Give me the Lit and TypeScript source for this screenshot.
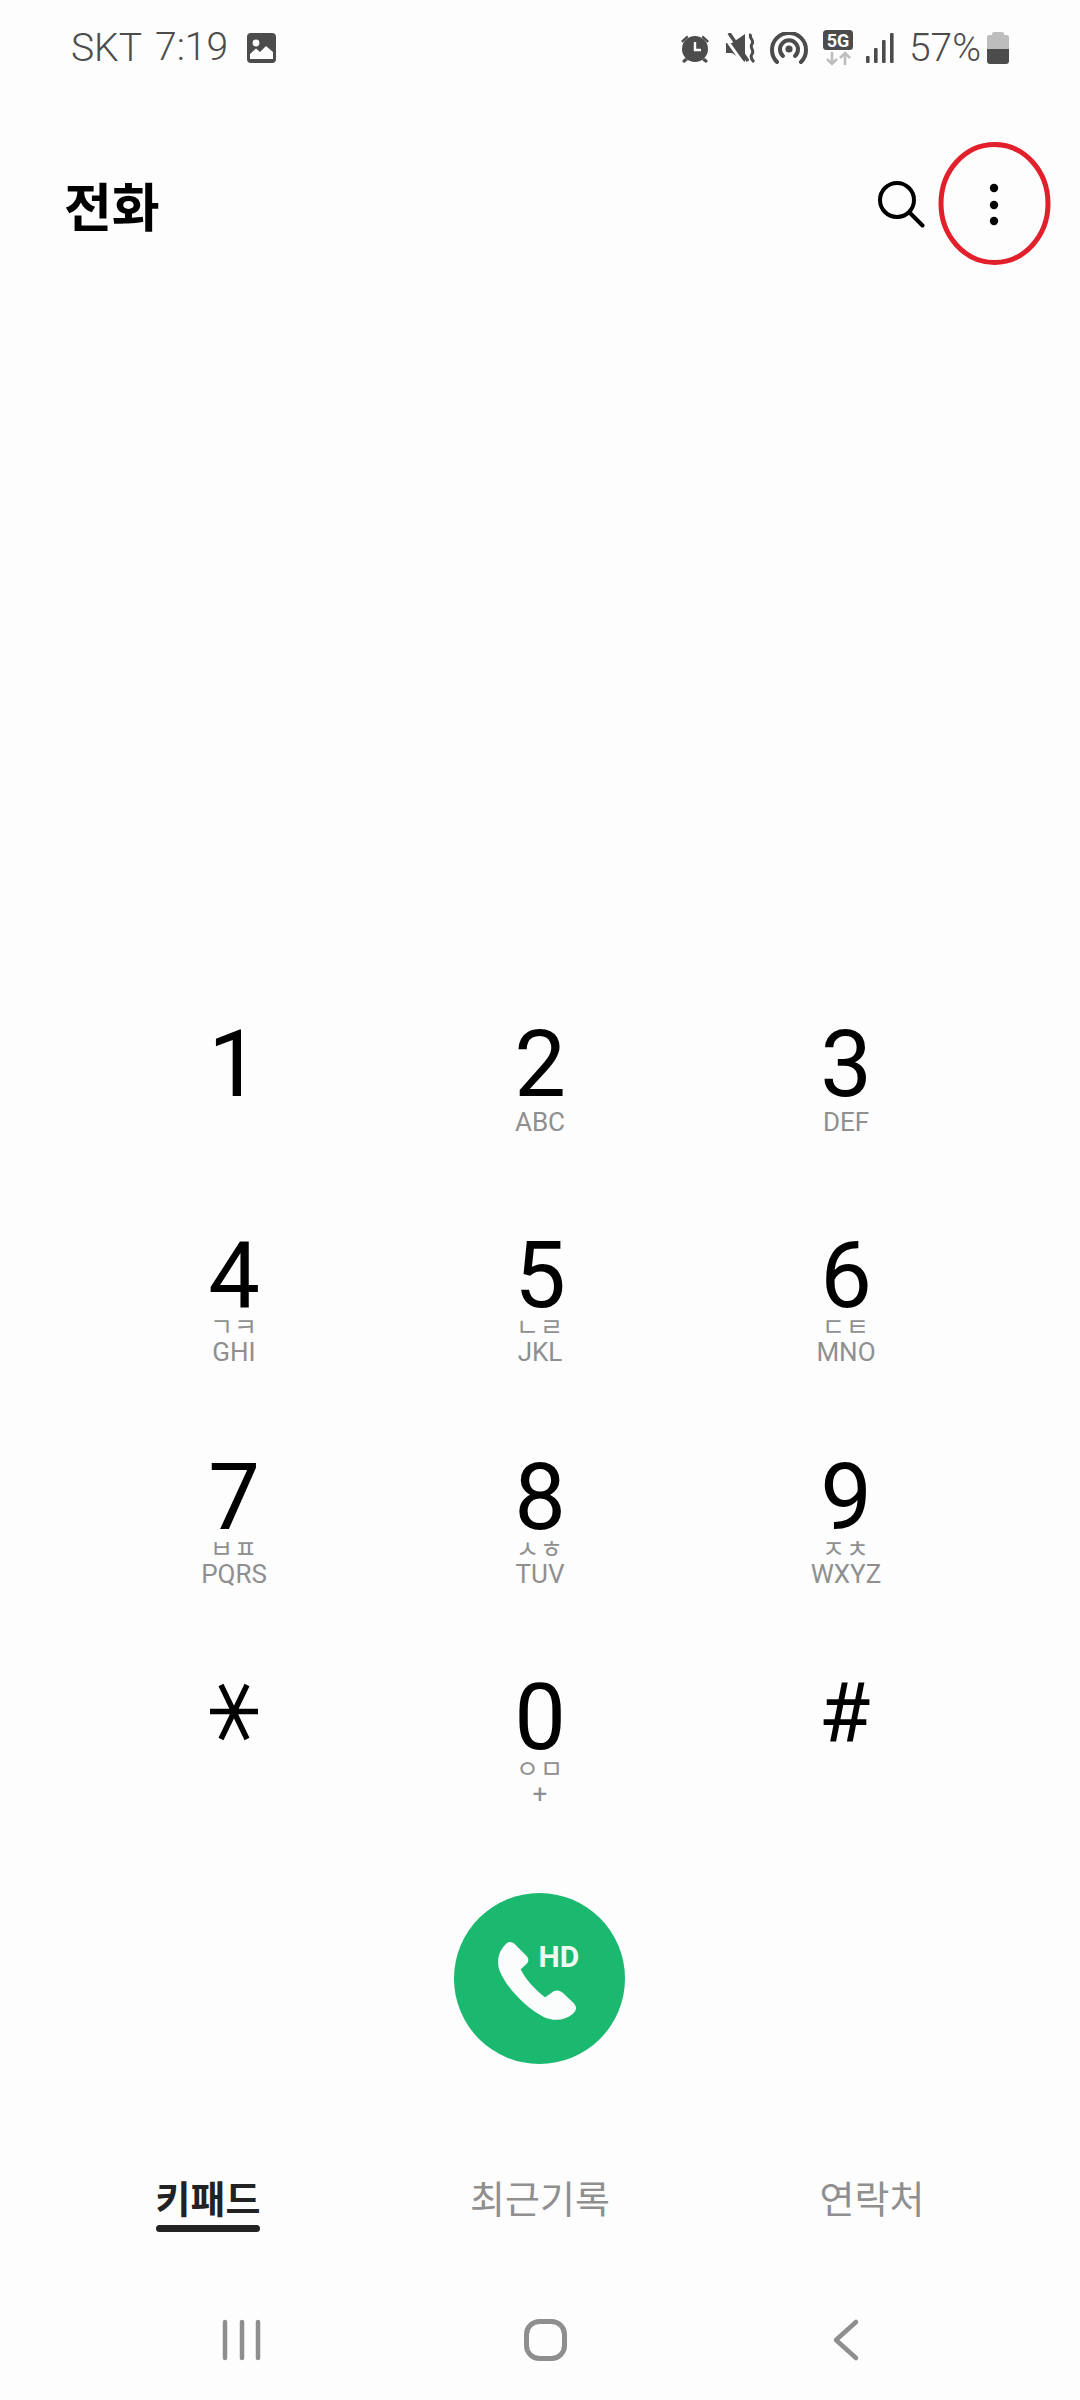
import { LitElement, html, css, svg } from "lit";
import { customElement } from "lit/decorators.js";

const keys = [
  ["1", "", ""], ["2", "", "ABC"], ["3", "", "DEF"],
  ["4", "ㄱㅋ", "GHI"], ["5", "ㄴㄹ", "JKL"], ["6", "ㄷㅌ", "MNO"],
  ["7", "ㅂㅍ", "PQRS"], ["8", "ㅅㅎ", "TUV"], ["9", "ㅈㅊ", "WXYZ"],
  ["*", "", ""], ["0", "ㅇㅁ", "+"], ["#", "", ""],
];

@customElement("app-root")
export class AppRoot extends LitElement {
  static styles = css`
    :host { display: block; width: 1080px; height: 2400px; background: #fdfdfd; font-family: Roboto, "Noto Sans CJK KR", sans-serif; overflow: hidden; }
    .page { width: 1080px; height: 2400px; display: flex; flex-direction: column; position: relative; }
    .status { height: 96px; display: flex; align-items: center; padding: 0 71px 0 71px; color: #4c4c4c; font-size: 39px; font-weight: 300; box-sizing: border-box; flex: none; }
    .status svg { display: block; flex: none; }
    .carrier { margin-right: 13px; }
    .clock { margin-right: 19px; margin-top: -3px; }
    .right { margin-left: auto; display: flex; align-items: center; }
    .pct { margin: 0 6px 0 15px; }
    .i16 { margin-right: 16px; }
    .i14 { margin-right: 14px; }
    .i15 { margin-right: 15px; }
    .i13 { margin-right: 13px; }
    .header { height: 120px; margin-top: 53px; display: flex; align-items: center; padding: 0 0 0 64px; position: relative; flex: none; }
    .title { font-family: "Noto Sans CJK KR", sans-serif; font-weight: 700; font-size: 52px; color: #000; line-height: 1; margin-top: -8px; }
    .search { position: absolute; left: 875px; top: 29px; }
    .dots { position: absolute; left: 984px; top: 28px; }
    .ring { position: absolute; left: 936px; top: 140px; }
    .keypad { margin-top: 750px; padding: 0 81px; display: grid; grid-template-columns: repeat(3, 306px); grid-template-rows: 211px 222px 220px 200px; height: 853px; flex: none; }
    .key { display: flex; flex-direction: column; align-items: center; padding-top: 10px; }
    .digit { font-size: 92px; line-height: 72px; color: #000; font-weight: 400; height: 72px; }
    .digit.hash { font-size: 84px; line-height: 64px; margin-left: -3px; }
    .star { display: block; }
    .ko { font-family: "Noto Sans CJK KR", sans-serif; font-size: 25px; line-height: 22px; color: #8f8f8f; height: 22px; letter-spacing: 1px; margin-top: 2px; }
    .en { font-size: 26px; line-height: 30px; color: #8f8f8f; margin-top: 1px; }
    .en.solo { margin-top: 6px; }
    .callrow { display: flex; justify-content: center; margin-top: 21px; flex: none; }
    .call { width: 171px; height: 171px; border-radius: 50%; background: #1bb86f; position: relative; margin-left: -2px; }
    .call svg { display: block; }
    .hd { position: absolute; left: 85px; top: 47px; color: #eef9f3; font-weight: 700; font-size: 30px; line-height: 34px; }
    .tabs { display: grid; grid-template-columns: repeat(3, 332px); padding-left: 42px; margin-top: 108px; flex: none; }
    .tab { font-family: "Noto Sans CJK KR", sans-serif; font-size: 38px; line-height: 50px; color: #8f8f8f; text-align: center; }
    .tab.on { color: #222; font-weight: 700; }
    .tab.on span { position: relative; display: inline-block; }
    .tab.on span::after { content: ""; position: absolute; left: 0; right: 0; top: 53px; height: 7px; border-radius: 4px; background: #222; }
    .navbar { position: absolute; left: 0; top: 2310px; }
  `;

  icons() {
    return html`
      <svg class="i16" width="30" height="30" viewBox="0 0 30 30"><g fill="#4c4c4c"><circle cx="15" cy="16" r="13"/><path d="M1 8 L7 2.5 L8.5 4.2 L2.6 9.8Z M29 8 L23 2.5 L21.5 4.2 L27.4 9.8Z M5 25 L2 28 L4 30 L8 27Z M25 25 L28 28 L26 30 L22 27Z"/></g><path d="M15 9 V17 H21" fill="none" stroke="#fdfdfd" stroke-width="2.4"/></svg>
      <svg class="i14" width="30" height="30" viewBox="0 0 30 30"><path fill="#4c4c4c" d="M0 10 h6 L19 1 V29 L6 20 H0 Z"/><path d="M0 6 L17 30" stroke="#fdfdfd" stroke-width="3"/><path d="M3 0 L22 28" stroke="#4c4c4c" stroke-width="3.4"/><path d="M25 1 C22 5 29 7 26 11 C23 15 29 17 26 21 C24 24 26 27 28 29" fill="none" stroke="#4c4c4c" stroke-width="3"/></svg>
      <svg class="i15" width="38" height="32" viewBox="0 0 38 32"><g fill="none" stroke="#4c4c4c" stroke-width="4" stroke-linecap="round"><path d="M7 30 A17 17 0 1 1 31 30"/><path d="M13 24 A9 9 0 1 1 25 24"/></g><circle cx="19" cy="17" r="3.6" fill="#4c4c4c"/></svg>
      <svg class="i13" width="30" height="36" viewBox="0 0 30 36"><rect x="0" y="0" width="30" height="20" rx="3.5" fill="#4c4c4c"/><text x="15" y="16.5" text-anchor="middle" font-family="Roboto" font-weight="700" font-size="18" fill="#fdfdfd">5G</text><path d="M9 22 V34 M4 29 L9 34 L14 29 M22 35 V23 M17 28 L22 23 L27 28" fill="none" stroke="#bdbdbd" stroke-width="2.6"/></svg>
      <svg width="28" height="30" viewBox="0 0 28 30"><g fill="#4c4c4c"><rect x="0" y="23" width="3.6" height="7" rx="1"/><rect x="8" y="15" width="3.6" height="15" rx="1"/><rect x="16" y="7" width="3.6" height="23" rx="1"/><rect x="24" y="0" width="3.6" height="30" rx="1"/></g></svg>
      <span class="pct">57%</span>
      <svg width="22" height="32" viewBox="0 0 22 32"><path d="M7 0 h8 a2 2 0 0 1 2 2 v1 h3 a2 2 0 0 1 2 2 v12 H0 V5 a2 2 0 0 1 2 -2 h3 V2 a2 2 0 0 1 2 -2Z" fill="#bdbdbd"/><path d="M0 17 h22 v12 a3 3 0 0 1 -3 3 H3 a3 3 0 0 1 -3 -3Z" fill="#4c4c4c"/></svg>
    `;
  }

  digit(d: string) {
    if (d === "*") {
      return html`<svg class="star" width="48" height="60" viewBox="0 0 48 60" role="img" aria-label="*"><path d="M0 29.5 H48 M11 3 L37 57 M37 3 L11 57" fill="none" stroke="#000" stroke-width="5.5"/></svg>`;
    }
    return html`<div class="digit ${d === "#" ? "hash" : ""}">${d}</div>`;
  }

  render() {
    return html`
      <div class="page">
        <div class="status">
          <span class="carrier">SKT</span><span class="clock">7:19</span>
          <svg width="29" height="30" viewBox="0 0 29 30"><rect width="29" height="30" rx="4" fill="#4c4c4c"/><circle cx="9" cy="10" r="3.4" fill="#fdfdfd"/><path d="M3 26 V21 L9 15.5 L13 19 L19 13 L26 19 V26 Z" fill="#fdfdfd"/></svg>
          <div class="right">${this.icons()}</div>
        </div>
        <div class="header">
          <span class="title">전화</span>
          <svg class="search" width="50" height="50" viewBox="0 0 50 50"><circle cx="22" cy="22" r="17" fill="none" stroke="#000" stroke-width="4"/><path d="M34.5 34.5 L47.5 47.5" stroke="#000" stroke-width="4" stroke-linecap="round"/></svg>
          <svg class="dots" width="20" height="60" viewBox="0 0 20 60"><circle cx="10" cy="11" r="4.2"/><circle cx="10" cy="28" r="4.2"/><circle cx="10" cy="44" r="4.2"/></svg>
        </div>
        <svg class="ring" width="118" height="128" viewBox="0 0 118 128"><ellipse cx="58.5" cy="63.5" rx="53.5" ry="59" fill="none" stroke="#e2202c" stroke-width="5"/></svg>
        <div class="keypad">
          ${keys.map(([d, k, e]) => html`
            <div class="key">
              ${this.digit(d)}
              ${k ? html`<div class="ko">${k}</div>` : ""}
              ${e ? html`<div class="en ${k ? "" : "solo"}">${e}</div>` : ""}
            </div>`)}
        </div>
        <div class="callrow">
          <div class="call">
            <svg width="171" height="171" viewBox="72 69 513 513"><path fill="#fbfdfc" d="M232 218 C245 212 255 222 262 230 L290 258 C297 266 296 275 290 281 L272 298 C285 325 315 360 345 382 L365 368 C375 358 390 360 400 370 L430 398 C442 410 440 422 428 432 C405 452 370 455 340 440 C290 415 235 360 210 305 C198 275 205 240 232 218 Z"/></svg>
            <span class="hd">HD</span>
          </div>
        </div>
        <div class="tabs">
          <div class="tab on"><span>키패드</span></div><div class="tab">최근기록</div><div class="tab">연락처</div>
        </div>
        <svg class="navbar" width="1080" height="60" viewBox="0 0 1080 60">
          ${svg`<g fill="none" stroke="#8e8e8e" stroke-linecap="round" stroke-linejoin="round">
            <path d="M225 12 V48 M242 12 V48 M258 12 V48" stroke-width="4.5"/>
            <rect x="526.5" y="11.5" width="38" height="37" rx="13" stroke-width="5"/>
            <path d="M856 12 L836 30 L856 48" stroke-width="4.5"/>
          </g>`}
        </svg>
      </div>
    `;
  }
}
